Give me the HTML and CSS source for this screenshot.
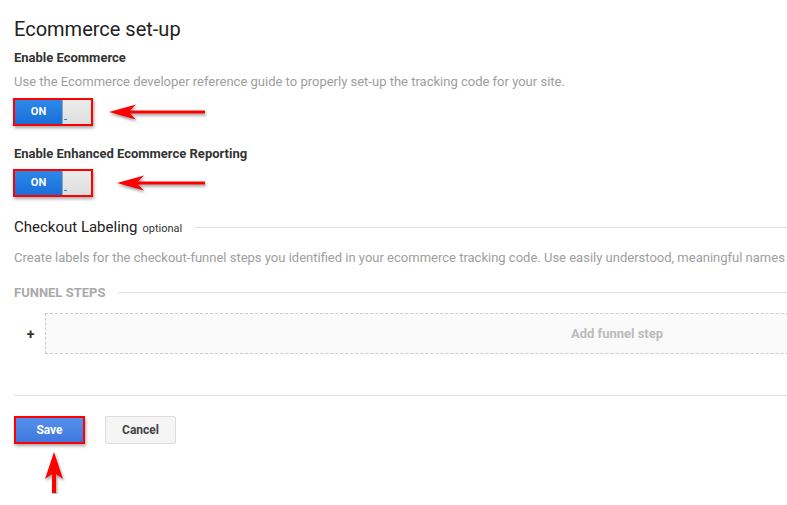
FILE: index.html
```html
<!DOCTYPE html>
<html lang="en">
<head>
    <meta charset="UTF-8">
    <meta name="viewport" content="width=device-width, initial-scale=1.0">
    <title>Ecommerce set-up</title>
    <link rel="stylesheet" href="styles.css">
</head>
<body>

<div class="page">
    <h1>Ecommerce set-up</h1>

    <div class="label first">Enable Ecommerce</div>
    <div class="desc">Use the Ecommerce developer reference guide to properly set-up the tracking code for your site.</div>
    <div class="toggle-row">
        <div class="mark toggle">
            <span class="toggle-on">ON</span>
            <span class="toggle-off"><i class="toggle-tick"></i></span>
        </div>
        <svg class="arrow arrow-one" width="100" height="24" viewBox="0 0 100 24">
            <path d="M0 12 L27 4.5 L21 10.5 L96 10.5 L96 13.5 L21 13.5 L27 19.5 Z" fill="#f00"/>
        </svg>
    </div>

    <div class="label second">Enable Enhanced Ecommerce Reporting</div>
    <div class="toggle-row tight">
        <div class="mark toggle">
            <span class="toggle-on">ON</span>
            <span class="toggle-off"><i class="toggle-tick"></i></span>
        </div>
        <svg class="arrow arrow-two" width="92" height="24" viewBox="0 0 92 24">
            <path d="M0 12 L27 4.5 L21 10.5 L88 10.5 L88 13.5 L21 13.5 L27 19.5 Z" fill="#f00"/>
        </svg>
    </div>

    <div class="section-head">
        <span class="section-title">Checkout Labeling</span>
        <span class="optional">optional</span>
        <span class="rule"></span>
    </div>
    <div class="desc wide">Create labels for the checkout-funnel steps you identified in your ecommerce tracking code. Use easily understood, meaningful names</div>

    <div class="funnel-head">
        <span>FUNNEL STEPS</span>
        <span class="rule"></span>
    </div>
    <div class="funnel-row">
        <span class="plus">+</span>
        <div class="add-step">Add funnel step</div>
    </div>

    <div class="divider"></div>

    <div class="actions">
        <div class="mark save-wrap"><button class="btn-save">Save</button></div>
        <button class="btn-cancel">Cancel</button>
    </div>
    <svg class="arrow arrow-up" width="24" height="42" viewBox="0 0 24 42">
        <path d="M12 0 L21 27 L14 22 L14 41 L10 41 L10 22 L3 27 Z" fill="#f00"/>
    </svg>
</div>

</body>
</html>
```

FILE: styles.css
```css
html, body {
    margin: 0;
    padding: 0;
    overflow: hidden;
    background-color: #fff;
}
body {
    font-family: Roboto, "Liberation Sans", Arial, sans-serif;
    color: #333;
}
.page {
    width: 1175px;
    padding: 17px 0 0 14px;
}
h1 {
    margin: 0;
    font-size: 20px;
    line-height: 24px;
    font-weight: 400;
    color: #222;
}
.label {
    font-size: 13px;
    line-height: 16px;
    font-weight: 700;
    color: #333;
}
.label.first {
    margin-top: 9px;
}
.label.second {
    margin-top: 20px;
}
.desc {
    margin-top: 8px;
    font-size: 13px;
    line-height: 16px;
    color: #9e9e9e;
    white-space: nowrap;
}
.desc.wide {
    margin-top: 13px;
}
.toggle-row {
    display: flex;
    align-items: center;
    margin-top: 8px;
    margin-left: -1px;
}
.toggle-row.tight {
    margin-top: 7px;
}
.mark {
    border: 2px solid #f00;
    box-shadow: 1px 2px 3px rgba(0, 0, 0, 0.35);
}
.toggle {
    display: flex;
    width: 76px;
    height: 24px;
}
.toggle-on {
    width: 47px;
    line-height: 24px;
    text-align: center;
    font-size: 11px;
    font-weight: 700;
    color: #fff;
    background: linear-gradient(#2c88ea, #1a6fd8);
}
.toggle-off {
    position: relative;
    flex: 1;
    background: linear-gradient(#ececec, #dedede);
    border-left: 1px solid #9aa4b0;
}
.toggle-tick {
    position: absolute;
    left: 1px;
    bottom: 4px;
    width: 3px;
    height: 1px;
    background-color: #2a7de0;
}
.arrow {
    filter: drop-shadow(1px 2px 1.5px rgba(0, 0, 0, 0.4));
}
.arrow-one {
    margin-left: 16px;
}
.arrow-two {
    margin-left: 24px;
}
.section-head {
    display: flex;
    align-items: center;
    margin-top: 20px;
    height: 20px;
}
.section-title {
    font-size: 15px;
    color: #222;
}
.optional {
    margin-left: 5px;
    margin-top: 2px;
    font-size: 11px;
    color: #333;
}
.rule {
    flex: 1;
    height: 1px;
    margin-left: 13px;
    background-color: #e0e0e0;
}
.funnel-head {
    display: flex;
    align-items: center;
    margin-top: 19px;
    height: 14px;
    font-size: 13px;
    font-weight: 700;
    color: #aaa;
}
.funnel-row {
    display: flex;
    align-items: center;
    margin-top: 14px;
}
.plus {
    width: 33px;
    text-align: center;
    font-size: 14px;
    font-weight: 700;
    color: #333;
}
.add-step {
    flex: 1;
    margin-left: -2px;
    height: 39px;
    line-height: 39px;
    text-align: center;
    font-size: 13px;
    font-weight: 700;
    color: #bbb;
    background-color: #fafafa;
    border: 1px dashed #ccc;
}
.divider {
    margin-top: 41px;
    height: 1px;
    background-color: #e0e0e0;
}
.actions {
    display: flex;
    align-items: center;
    gap: 20px;
    margin-top: 20px;
}
.save-wrap {
    width: 67px;
    height: 24px;
}
button {
    font-family: Roboto, "Liberation Sans", Arial, sans-serif;
    font-size: 12px;
    font-weight: 700;
    cursor: pointer;
    padding: 0;
}
.btn-save {
    display: block;
    width: 100%;
    height: 100%;
    border: none;
    color: #fff;
    background: linear-gradient(#5690ee, #3f78dc);
}
.btn-cancel {
    width: 71px;
    height: 28px;
    color: #444;
    background-color: #f5f5f5;
    border: 1px solid #dcdcdc;
    border-radius: 2px;
}
.arrow-up {
    display: block;
    margin-top: 8px;
    margin-left: 28px;
}
```
